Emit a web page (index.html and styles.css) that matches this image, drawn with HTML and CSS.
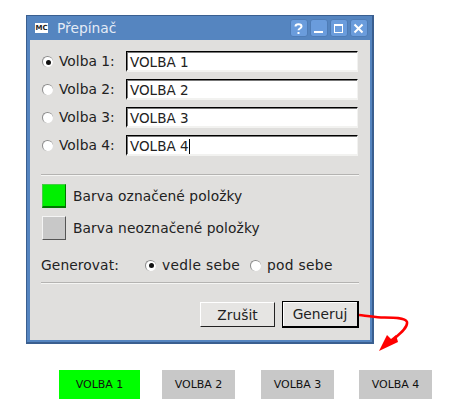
FILE: index.html
```html
<!DOCTYPE html>
<html>
<head>
   <title>Přepínač</title>
   <link rel="stylesheet" href="styles.css">
</head>
<body>
   <!-- dialog window -->
   <div class="window">
       <div class="titlebar">
           <span class="app-icon">MC</span>
           <span class="title">Přepínač</span>
           <div class="title-buttons">
               <span class="title-button">
                   <svg width="16" height="16" viewBox="0 0 16 16"><path d="M4.500 6.500c0-1.500 1.300-2.200 3-2.200s3 .7 3 2.200c0 2-3 2-3 3.800" fill="none" stroke="#fff" stroke-width="2"/><rect x="6.500" y="12" width="2" height="2" fill="#fff"/></svg>
               </span>
               <span class="title-button">
                   <svg width="16" height="16" viewBox="0 0 16 16"><rect x="3" y="11" width="9" height="2" fill="#fff"/></svg>
               </span>
               <span class="title-button">
                   <svg width="16" height="16" viewBox="0 0 16 16"><rect x="3.500" y="4.500" width="8" height="8" fill="none" stroke="#fff"/><rect x="3" y="4" width="9" height="2" fill="#fff"/></svg>
               </span>
               <span class="title-button">
                   <svg width="16" height="16" viewBox="0 0 16 16"><path d="M3.500 4.500l8 8M11.500 4.500l-8 8" stroke="#fff" stroke-width="2"/></svg>
               </span>
           </div>
       </div>

       <div class="content">
           <div class="options">
               <div class="option"><span class="radio checked"></span><label>Volba 1:</label><div class="field">VOLBA 1</div></div>
               <div class="option"><span class="radio"></span><label>Volba 2:</label><div class="field">VOLBA 2</div></div>
               <div class="option"><span class="radio"></span><label>Volba 3:</label><div class="field">VOLBA 3</div></div>
               <div class="option"><span class="radio"></span><label>Volba 4:</label><div class="field">VOLBA 4<span class="caret"></span></div></div>
           </div>

           <hr class="separator">

           <div class="colors">
               <div class="color-row"><span class="swatch green"></span>Barva označené položky</div>
               <div class="color-row"><span class="swatch gray"></span>Barva neoznačené položky</div>
           </div>

           <div class="generate-row">
               <span class="generate-label">Generovat:</span>
               <span class="radio checked"></span><span class="generate-choice">vedle sebe</span>
               <span class="radio"></span><span>pod sebe</span>
           </div>

           <hr class="separator second">

           <div class="button-group">
               <button class="button">Zrušit</button>
               <button class="button default-button">Generuj</button>
           </div>
       </div>
   </div>

   <!-- generated result -->
   <div class="result">
       <span class="chip green-chip">VOLBA 1</span>
       <span class="chip">VOLBA 2</span>
       <span class="chip">VOLBA 3</span>
       <span class="chip">VOLBA 4</span>
   </div>

   <!-- red arrow over the dialog edge -->
   <svg class="arrow" width="60" height="50" viewBox="0 0 60 50">
       <path d="M0 8C8 9 14 10 22 10.500C32 10.500 46 10 48 15C49 20 42 26 36 31" fill="none" stroke="#f00" stroke-width="2.500"/>
       <path d="M20 44L28 28L32 32L37 28L39 35Z" fill="#f00"/>
   </svg>
</body>
</html>
```

FILE: styles.css
```css
/* page */
body {
    margin: 0;
    padding: 15px 0 0 26px;
    background-color: white;
    font-family: "DejaVu Sans", sans-serif;
    font-size: 13.800px;
    color: #222;
    position: relative;
    height: 404px;
    overflow: hidden;
}

/* dialog window */
.window {
    width: 340px;
    border: 1px solid #3a5f90;
    border-right-width: 2px;
    border-bottom-width: 2px;
    background-color: #5585c0;
    padding: 0 2px 2px 3px;
}

.titlebar {
    height: 24px;
    display: flex;
    align-items: center;
    padding-left: 5px;
    color: #e4ebf6;
}

.app-icon {
    width: 13px;
    height: 10px;
    background-color: white;
    color: #222;
    font-size: 7px;
    font-weight: bold;
    line-height: 10px;
    text-align: center;
    margin-right: 9px;
}

.title {
    flex: 1;
}

.title-buttons {
    display: flex;
    gap: 2px;
    margin-right: 2px;
}

.title-button {
    width: 18px;
    height: 18px;
    box-sizing: border-box;
    background-color: #6a9cdc;
    border: 1px solid #4e7cb6;
    border-radius: 3px;
}

.title-button svg {
    display: block;
}

/* dialog body */
.content {
    background-color: #e0dfdd;
    padding: 11px 11px;
    height: 278px;
}

.options {
    display: flex;
    flex-direction: column;
    gap: 7px;
    padding-left: 1px;
}

.option {
    display: flex;
    align-items: center;
    height: 21px;
}

.option label {
    width: 67px;
    padding-bottom: 2px;
}

.radio {
    width: 11px;
    height: 11px;
    border-radius: 50%;
    background-color: white;
    border-top: 1px solid #8a8a8a;
    border-left: 1px solid #8a8a8a;
    box-sizing: border-box;
    margin-right: 6px;
    display: inline-flex;
    align-items: center;
    justify-content: center;
    flex-shrink: 0;
}

.radio.checked::after {
    content: "";
    width: 5px;
    height: 5px;
    border-radius: 50%;
    background-color: #111;
}

.field {
    width: 232px;
    height: 21px;
    box-sizing: border-box;
    background-color: white;
    border-top: 1px solid #000;
    border-left: 1px solid #000;
    border-right: 1px solid #f2f2f0;
    border-bottom: 2px solid #f2f2f0;
    box-shadow: inset 1px 1px 0 #777;
    padding-left: 3px;
    line-height: 20px;
    font-size: 13.500px;
}

.caret {
    display: inline-block;
    width: 1px;
    height: 15px;
    background-color: black;
    vertical-align: -3px;
}

.separator {
    margin: 18px 0 0 0;
    border: none;
    border-top: 1px solid #b4b3b1;
    border-bottom: 1px solid #f5f5f3;
}

.separator.second {
    margin-top: 8px;
}

.colors {
    display: flex;
    flex-direction: column;
    gap: 8px;
    margin-top: 8px;
    padding-left: 1px;
}

.color-row {
    display: flex;
    align-items: center;
    gap: 7px;
    letter-spacing: 0.080px;
}

.swatch {
    width: 24px;
    height: 24px;
    box-sizing: border-box;
    border-top: 1px solid #f4f4f4;
    border-left: 1px solid #f4f4f4;
    border-right: 1px solid #555;
    border-bottom: 1px solid #555;
}

.green {
    background-color: #00f000;
    border-top-color: #4c4;
    border-left-color: #4c4;
    border-right-color: #070;
    border-bottom-width: 2px;
    border-bottom-color: #070;
}

.gray {
    background-color: #c8c8c8;
}

.generate-row {
    display: flex;
    align-items: center;
    margin-top: 16px;
    height: 18px;
    letter-spacing: 0.300px;
}

.generate-label {
    width: 104px;
    letter-spacing: 0.100px;
}

.generate-choice {
    margin-right: 10px;
}

/* dialog buttons */
.button-group {
    display: flex;
    justify-content: flex-end;
    align-items: center;
    gap: 7px;
    margin-top: 17px;
}

.button {
    width: 75px;
    height: 25px;
    padding: 0;
    font: inherit;
    color: #222;
    background-color: #e6e5e3;
    border: 1px solid;
    border-color: #fff #222 #222 #fff;
}

.default-button {
    width: 77px;
    height: 27px;
    border: 1px solid black;
    border-right-width: 2px;
    border-bottom-width: 2px;
    box-shadow: inset 1px 1px 0 #fff;
}

/* generated chips */
.result {
    display: flex;
    gap: 26px;
    margin: 26px 0 0 33px;
}

.chip {
    width: 73px;
    height: 29px;
    background-color: #c8c8c8;
    color: #111;
    font-size: 11px;
    line-height: 29px;
    text-align: center;
}

.chip:last-child {
    margin-left: -1px;
}

.green-chip {
    width: 81px;
    background-color: #0f0;
    margin-right: -4px;
}

.arrow {
    position: absolute;
    left: 359px;
    top: 307px;
}
```
